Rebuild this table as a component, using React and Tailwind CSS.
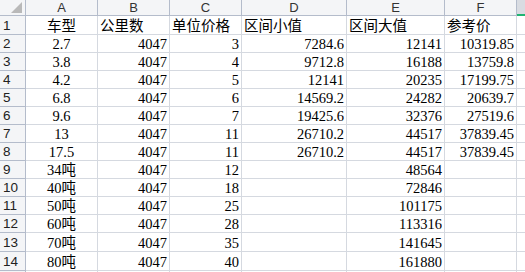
const cols = ["A", "B", "C", "D", "E", "F"];

const rows = [
  { n: 1, h: "h-[19px]", cells: ["车型", "公里数", "单位价格", "区间小值", "区间大值", "参考价"], head: true },
  { n: 2, h: "h-[18px]", cells: ["2.7", "4047", "3", "7284.6", "12141", "10319.85"] },
  { n: 3, h: "h-[18px]", cells: ["3.8", "4047", "4", "9712.8", "16188", "13759.8"] },
  { n: 4, h: "h-[18px]", cells: ["4.2", "4047", "5", "12141", "20235", "17199.75"] },
  { n: 5, h: "h-[18px]", cells: ["6.8", "4047", "6", "14569.2", "24282", "20639.7"] },
  { n: 6, h: "h-[18px]", cells: ["9.6", "4047", "7", "19425.6", "32376", "27519.6"] },
  { n: 7, h: "h-[18px]", cells: ["13", "4047", "11", "26710.2", "44517", "37839.45"] },
  { n: 8, h: "h-[18px]", cells: ["17.5", "4047", "11", "26710.2", "44517", "37839.45"] },
  { n: 9, h: "h-[18px]", cells: ["34吨", "4047", "12", "", "48564", ""] },
  { n: 10, h: "h-[18px]", cells: ["40吨", "4047", "18", "", "72846", ""] },
  { n: 11, h: "h-[18px]", cells: ["50吨", "4047", "25", "", "101175", ""] },
  { n: 12, h: "h-[18px]", cells: ["60吨", "4047", "28", "", "113316", ""] },
  { n: 13, h: "h-[19px]", cells: ["70吨", "4047", "35", "", "141645", ""] },
  { n: 14, h: "h-[19px]", cells: ["80吨", "4047", "40", "", "161880", ""] },
  // next row only peeks in at the bottom edge
  { n: "", h: "h-[18px]", cells: ["", "", "", "", "", ""] },
];

function Cell({ text, align, h }) {
  const justify =
    align === "c" ? "justify-center" : align === "r" ? "justify-end" : "justify-start";
  return (
    <div
      className={`${h} ${justify} flex items-end overflow-hidden whitespace-nowrap border-r border-b border-[#d5d9e0] bg-white px-[2px] text-[14.5px] leading-[16px] text-black`}
    >
      {text}
    </div>
  );
}

export default function App() {
  return (
    <div className="h-[272px] w-[525px] overflow-hidden bg-white font-['Liberation_Serif','Noto_Sans_CJK_SC',serif]">
      <div className="grid grid-cols-[26px_72px_72px_72px_105px_98px_72px_1fr]">
        {/* corner */}
        <div className="flex h-[16px] items-end justify-end border-r border-b border-[#b4bccb] bg-[#f4f5f7] pr-[3px] pb-[2px]">
          <svg width="11" height="11" viewBox="0 0 11 11">
            <polygon points="11,0 11,11 0,11" fill="#b9b9b9" />
          </svg>
        </div>
        {cols.map((c) => (
          <div
            key={c}
            className="flex h-[16px] items-center justify-center border-r border-b border-[#b4bccb] bg-[#f4f5f7] font-['Liberation_Sans',sans-serif] text-[13px] leading-[15px] text-[#333]"
          >
            {c}
          </div>
        ))}
        <div className="h-[16px] border-b-2 border-[#21b472] bg-[#d9dce2]" />

        {rows.map((r, idx) => (
          <div key={idx} className="contents">
            <div
              className={`${r.h} flex items-end border-r border-b border-[#b4bccb] bg-[#f4f5f7] pl-[3px] font-['Liberation_Sans',sans-serif] text-[13.5px] leading-[17px] text-[#222]`}
            >
              {r.n}
            </div>
            {r.cells.map((t, i) => (
              <Cell
                key={i}
                text={t}
                h={r.h}
                align={i === 0 ? "c" : r.head ? "l" : "r"}
              />
            ))}
            <div className={`${r.h} border-b border-[#d5d9e0] bg-white`} />
          </div>
        ))}
      </div>
    </div>
  );
}
